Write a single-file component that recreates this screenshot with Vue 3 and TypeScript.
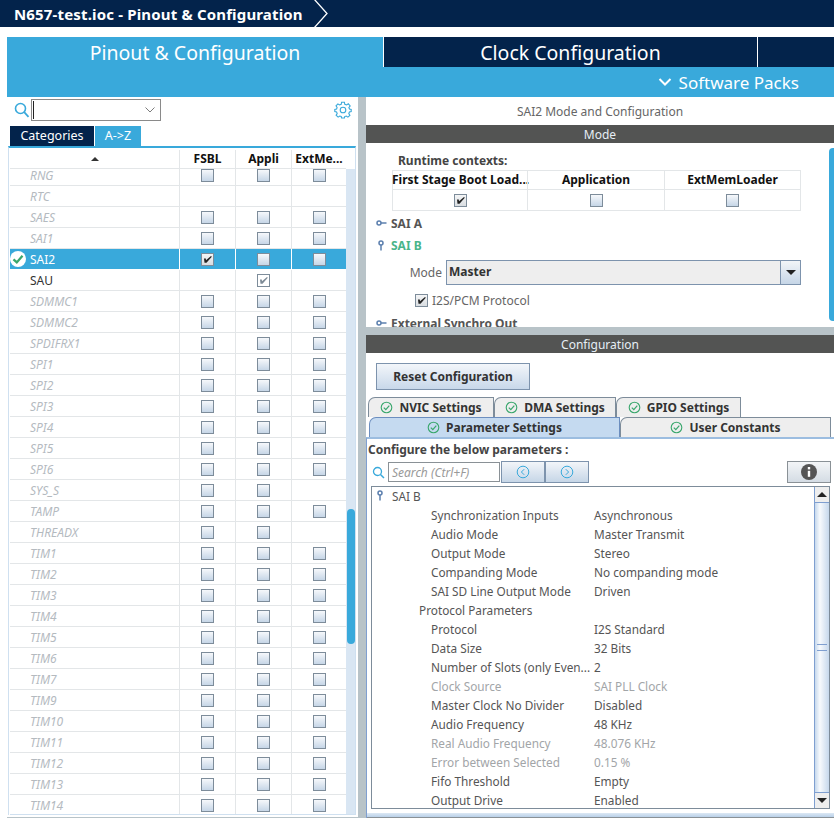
<script setup lang="ts">
interface Row { n: string; f: number; a: number; e: number; st?: string }
const mk = (n: string, f = 1, a = 1, e = 1, st = 'off'): Row => ({ n, f, a, e, st })
const rows: Row[] = [
  mk('RNG'), mk('RTC', 0, 0, 0), mk('SAES'), mk('SAI1'), mk('SAI2', 2, 1, 1, 'sel'), mk('SAU', 0, 3, 0, 'on'),
  mk('SDMMC1'), mk('SDMMC2'), mk('SPDIFRX1'), mk('SPI1'), mk('SPI2'), mk('SPI3'), mk('SPI4'), mk('SPI5'), mk('SPI6'),
  mk('SYS_S', 1, 1, 0), mk('TAMP'), mk('THREADX', 1, 1, 0), mk('TIM1'), mk('TIM2'), mk('TIM3'), mk('TIM4'), mk('TIM5'),
  mk('TIM6'), mk('TIM7'), mk('TIM9'), mk('TIM10'), mk('TIM11'), mk('TIM12'), mk('TIM13'), mk('TIM14'),
]
const params = [
  ['Synchronization Inputs', 'Asynchronous', ''], ['Audio Mode', 'Master Transmit', ''], ['Output Mode', 'Stereo', ''],
  ['Companding Mode', 'No companding mode', ''], ['SAI SD Line Output Mode', 'Driven', ''], ['Protocol Parameters', '', 'grp'],
  ['Protocol', 'I2S Standard', ''], ['Data Size', '32 Bits', ''], ['Number of Slots (only Even...', '2', ''],
  ['Clock Source', 'SAI PLL Clock', 'dis'], ['Master Clock No Divider', 'Disabled', ''], ['Audio Frequency', '48 KHz', ''],
  ['Real Audio Frequency', '48.076 KHz', 'dis'], ['Error between Selected', '0.15 %', 'dis'], ['Fifo Threshold', 'Empty', ''],
  ['Output Drive', 'Enabled', ''],
]
const topTabs = ['NVIC Settings', 'DMA Settings', 'GPIO Settings']
const ctxHeads = ['First Stage Boot Load...', 'Application', 'ExtMemLoader']
</script>

<template>
  <div class="root">
    <header class="title">
      <span class="title-text">N657-test.ioc - Pinout &amp; Configuration</span>
      <svg class="crumb" width="16" height="27" viewBox="0 0 16 27"><path d="M1 -1 L14 13.500 L1 28" fill="none" stroke="#fff" stroke-width="1.300" /></svg>
    </header>

    <div class="workspace">
      <nav class="tabs">
        <div class="tab tab-pinout">Pinout &amp; Configuration</div>
        <div class="tab tab-clock">Clock Configuration</div>
        <div class="tab tab-extra"></div>
      </nav>
      <div class="packs">
        <svg width="14" height="10" viewBox="0 0 14 10"><path d="M1.500 2 L7 7.500 L12.500 2" fill="none" stroke="#fff" stroke-width="2" /></svg>
        <span>Software Packs</span>
      </div>

      <div class="main">
        <aside class="left">
          <div class="searchrow">
            <svg class="mag" width="16" height="16" viewBox="0 0 16 16"><circle cx="6.500" cy="6.500" r="5" fill="none" stroke="#39a9db" stroke-width="1.600" /><path d="M10.200 10.200 L14.500 14.800" stroke="#39a9db" stroke-width="1.800" /></svg>
            <div class="combo">
              <span class="caret"></span>
              <svg width="10" height="6" viewBox="0 0 10 6"><path d="M0.500 0.500 L5 5 L9.500 0.500" fill="none" stroke="#7c7c7c" /></svg>
            </div>
            <svg class="gear" width="18" height="18" viewBox="0 0 18 18">
              <circle cx="9" cy="9" r="2.800" fill="none" stroke="#39a9db" stroke-width="1.100" />
              <path d="M7.600 1.200 H10.400 L10.800 3.300 L12.600 4 L14.300 2.800 L16.200 4.900 L14.900 6.500 L15.500 8 L17.200 8.400 V10.600 L15.400 11 L14.800 12.600 L15.900 14.300 L13.900 16.100 L12.300 15 L10.700 15.600 L10.400 17 H7.600 L7.200 15.500 L5.700 15 L4.100 16.100 L2.100 14.200 L3.200 12.600 L2.600 11 L0.800 10.600 V8.400 L2.600 8 L3.100 6.500 L2 4.900 L3.900 2.900 L5.500 4 L7.200 3.300 Z" fill="none" stroke="#39a9db" stroke-width="1.100" />
            </svg>
          </div>
          <div class="subtabs">
            <span class="sub sub-dark">Categories</span>
            <span class="sub sub-blue">A-&gt;Z</span>
          </div>
          <div class="tablewrap">
            <div class="thead">
              <div class="c0"><i class="sort"></i></div>
              <div class="c">FSBL</div>
              <div class="c">Appli</div>
              <div class="c">ExtMe...</div>
            </div>
            <div class="tbody">
              <div class="scroller">
                <div v-for="r in rows" :key="r.n" class="row" :class="r.st">
                  <div class="c0">
                    <svg v-if="r.st === 'sel'" class="okmark" width="16" height="16" viewBox="0 0 16 16"><circle cx="8" cy="8" r="8" fill="#fff" /><path d="M3.500 8.300 L6.800 11.400 L12.500 4.800" fill="none" stroke="#3aa76d" stroke-width="2.300" /></svg>
                    <span>{{ r.n }}</span>
                  </div>
                  <div v-for="(v, i) in [r.f, r.a, r.e]" :key="i" class="c">
                    <span v-if="v" class="box" :class="{ checked: v === 2, ghost: v === 3 }">
                      <svg v-if="v > 1" width="11" height="11" viewBox="0 0 11 11"><path d="M2 4.500 L2.500 8.800 L4.500 8.800 L9.800 2.800 L9 2 L4 6.200 L3.800 4.500 Z" :fill="v === 2 ? '#222' : '#7d8a96'" /></svg>
                    </span>
                  </div>
                </div>
              </div>
              <div class="vbar"><div class="vthumb"></div></div>
            </div>
          </div>
          <div class="leftfoot"></div>
        </aside>

        <section class="right">
          <div class="pane-title">SAI2 Mode and Configuration</div>
          <div class="bar">Mode</div>
          <div class="mode">
            <div class="mode-inner">
              <div class="rt-title">Runtime contexts:</div>
              <div class="ctx">
                <div v-for="h in ctxHeads" :key="h" class="ctx-h">{{ h }}</div>
                <div class="ctx-c"><span class="box checked"><svg width="11" height="11" viewBox="0 0 11 11"><path d="M2 4.500 L2.500 8.800 L4.500 8.800 L9.800 2.800 L9 2 L4 6.200 L3.800 4.500 Z" fill="#222" /></svg></span></div>
                <div class="ctx-c"><span class="box"></span></div>
                <div class="ctx-c"><span class="box"></span></div>
              </div>
              <div class="node node-a">
                <svg width="11" height="8" viewBox="0 0 11 8"><circle cx="3" cy="4" r="2" fill="none" stroke="#5b7fae" stroke-width="1.500" /><path d="M5 4 H10.500" stroke="#5b7fae" stroke-width="1.500" /></svg>
                <b>SAI A</b>
              </div>
              <div class="node node-b">
                <svg width="11" height="11" viewBox="0 0 11 11"><circle cx="5" cy="3" r="2" fill="none" stroke="#5b7fae" stroke-width="1.500" /><path d="M5 5 V10.500" stroke="#5b7fae" stroke-width="1.500" /></svg>
                <b>SAI B</b>
              </div>
              <div class="moderow">
                <label>Mode</label>
                <div class="select"><b>Master</b><span class="sel-btn"><i class="down"></i></span></div>
              </div>
              <div class="i2s">
                <span class="box checked"><svg width="11" height="11" viewBox="0 0 11 11"><path d="M2 4.500 L2.500 8.800 L4.500 8.800 L9.800 2.800 L9 2 L4 6.200 L3.800 4.500 Z" fill="#222" /></svg></span>
                <span>I2S/PCM Protocol</span>
              </div>
              <div class="node node-c">
                <svg width="11" height="8" viewBox="0 0 11 8"><circle cx="3" cy="4" r="2" fill="none" stroke="#5b7fae" stroke-width="1.500" /><path d="M5 4 H10.500" stroke="#5b7fae" stroke-width="1.500" /></svg>
                <b>External Synchro Out</b>
              </div>
            </div>
            <div class="mode-scroll"></div>
          </div>
          <div class="splitter"></div>
          <div class="bar">Configuration</div>
          <div class="config">
            <button class="reset">Reset Configuration</button>
            <div class="ctabs ctabs-1">
              <div v-for="t in topTabs" :key="t" class="ctab">
                <svg width="13" height="13" viewBox="0 0 13 13"><circle cx="6.500" cy="6.500" r="5.300" fill="none" stroke="#3aa76d" stroke-width="1.100" /><path d="M3.800 6.700 L5.800 8.700 L9.300 4.600" fill="none" stroke="#3aa76d" stroke-width="1.200" /></svg>
                {{ t }}
              </div>
            </div>
            <div class="ctabs ctabs-2">
              <div class="ctab ctab-param">
                <svg width="13" height="13" viewBox="0 0 13 13"><circle cx="6.500" cy="6.500" r="5.300" fill="none" stroke="#3aa76d" stroke-width="1.100" /><path d="M3.800 6.700 L5.800 8.700 L9.300 4.600" fill="none" stroke="#3aa76d" stroke-width="1.200" /></svg>
                Parameter Settings
              </div>
              <div class="ctab ctab-user">
                <svg width="13" height="13" viewBox="0 0 13 13"><circle cx="6.500" cy="6.500" r="5.300" fill="none" stroke="#3aa76d" stroke-width="1.100" /><path d="M3.800 6.700 L5.800 8.700 L9.300 4.600" fill="none" stroke="#3aa76d" stroke-width="1.200" /></svg>
                User Constants
              </div>
            </div>
            <div class="panel">
              <div class="configure">Configure the below parameters :</div>
              <div class="tools">
                <svg width="13" height="13" viewBox="0 0 13 13"><circle cx="5.500" cy="5.500" r="4" fill="none" stroke="#39a9db" stroke-width="1.300" /><path d="M8.500 8.500 L12 12" stroke="#39a9db" stroke-width="1.500" /></svg>
                <div class="finput">Search (Ctrl+F)</div>
                <div class="navs">
                  <button class="nav"><svg width="14" height="14" viewBox="0 0 14 14"><circle cx="7" cy="7" r="5.800" fill="none" stroke="#39a9db" /><path d="M8.200 4.200 L5.400 7 L8.200 9.800" fill="none" stroke="#39a9db" /></svg></button>
                  <button class="nav"><svg width="14" height="14" viewBox="0 0 14 14"><circle cx="7" cy="7" r="5.800" fill="none" stroke="#39a9db" /><path d="M5.800 4.200 L8.600 7 L5.800 9.800" fill="none" stroke="#39a9db" /></svg></button>
                </div>
                <button class="info"><svg width="16" height="16" viewBox="0 0 16 16"><circle cx="8" cy="8" r="8" fill="#555" /><rect x="6.800" y="6.800" width="2.400" height="6" fill="#fff" /><rect x="6.800" y="3" width="2.400" height="2.400" fill="#fff" /></svg></button>
              </div>
              <div class="tree">
                <div class="tree-body">
                  <div class="tree-root">
                    <svg width="9" height="11" viewBox="0 0 9 11"><circle cx="4" cy="3" r="2" fill="none" stroke="#5b7fae" stroke-width="1.500" /><path d="M4 5 V10.500" stroke="#5b7fae" stroke-width="1.500" /></svg>
                    <span>SAI B</span>
                  </div>
                  <div v-for="p in params" :key="p[0]" class="param" :class="p[2]">
                    <span class="pk">{{ p[0] }}</span>
                    <span class="pv">{{ p[1] }}</span>
                  </div>
                </div>
                <div class="tscroll">
                  <div class="arrow"><i class="up"></i></div>
                  <div class="tthumb">
                    <span class="grip"></span>
                  </div>
                  <div class="arrow"><i class="down"></i></div>
                </div>
              </div>
              <div class="panel-foot"></div>
            </div>
          </div>
        </section>
      </div>
    </div>
  </div>
</template>

<style scoped>
.root {
  width: 834px;
  height: 818px;
  overflow: hidden;
  background: #fff;
  font-family: "Noto Sans", sans-serif;
  font-size: 12px;
  color: #555;
  display: flex;
  flex-direction: column;
}
.title {
  height: 27px;
  flex: none;
  background: #03234b;
  display: flex;
  align-items: center;
  overflow: hidden;
  color: #fff;
}
.title-text {
  margin-left: 14px;
  font-weight: 700;
  font-size: 15px;
  letter-spacing: 0.16px;
  white-space: nowrap;
}
.crumb { margin-left: 10px; }
.workspace {
  flex: 1;
  min-height: 0;
  padding: 10px 0 0 7px;
  display: flex;
  flex-direction: column;
}
.tabs {
  height: 30px;
  flex: none;
  display: flex;
}
.tab {
  font-size: 19.5px;
  line-height: 32px;
  text-align: center;
  color: #fff;
}
.tab-pinout { width: 376px; background: #39a9db; }
.tab-clock { width: 373px; margin-left: 1px; background: #03234b; }
.tab-extra { flex: 1; margin-left: 1px; background: #03234b; }
.packs {
  height: 30px;
  flex: none;
  background: #39a9db;
  color: #fff;
  display: flex;
  align-items: center;
  justify-content: flex-end;
  gap: 7px;
  padding-right: 35px;
  font-size: 17px;
}
.main {
  flex: 1;
  min-height: 0;
  display: flex;
}
.left {
  width: 351px;
  flex: none;
  display: flex;
  flex-direction: column;
}
.searchrow {
  height: 29px;
  flex: none;
  box-sizing: border-box;
  display: flex;
  align-items: center;
  padding: 0 6px 3px 7px;
}
.mag { margin-right: 1px; }
.combo {
  width: 130px;
  height: 22px;
  box-sizing: border-box;
  border: 1px solid #8a8a8a;
  display: flex;
  align-items: center;
  justify-content: space-between;
  padding-right: 5px;
}
.caret { width: 1px; height: 18px; background: #222; margin-left: 1px; }
.gear { margin-left: auto; }
.subtabs {
  height: 20px;
  flex: none;
  display: flex;
  gap: 1px;
  padding-left: 3px;
}
.sub {
  color: #fff;
  font-size: 12.5px;
  line-height: 19px;
  text-align: center;
}
.sub-dark { width: 84px; background: #03234b; }
.sub-blue { width: 46px; background: #39a9db; }
.tablewrap {
  margin-left: 1px;
  width: 348px;
  box-sizing: border-box;
  border-top: 2px solid #39a9db;
  border-right: 1px solid #cfe0f0;
  border-left: 1px solid #cfe0f0;
  padding: 2px 0 0 1px;
  height: 669px;
  flex: none;
  display: flex;
  flex-direction: column;
}
.leftfoot {
  margin-top: auto;
  height: 1px;
  flex: none;
  background: #b8c3c8;
}
.thead {
  height: 19px;
  flex: none;
  display: flex;
  border-bottom: 1px solid #e3e6e8;
  box-sizing: border-box;
  margin-right: 9px;
  font-weight: 700;
  color: #111;
}
.thead .c { line-height: 20px; }
.c0 {
  width: 170px;
  flex: none;
  box-sizing: border-box;
  border-right: 1px solid #e3e6e8;
  padding-left: 20px;
  position: relative;
  display: flex;
  align-items: center;
}
.thead .c0 { justify-content: center; padding-left: 0; }
.sort {
  width: 0;
  height: 0;
  border: 4px solid transparent;
  border-top: 0;
  border-bottom: 4px solid #333;
}
.c {
  width: 56px;
  flex: none;
  box-sizing: border-box;
  border-right: 1px solid #e3e6e8;
  display: flex;
  align-items: center;
  justify-content: center;
  white-space: nowrap;
}
.c:last-child { width: 54px; border-right: 0; }
.tbody {
  flex: 1;
  min-height: 0;
  display: flex;
  overflow: hidden;
  border-bottom: 1px solid #cfe0f0;
}
.scroller {
  flex: 1;
  margin-top: -4px;
}
.row {
  height: 21px;
  box-sizing: border-box;
  display: flex;
  border-bottom: 1px solid #e3e6e8;
}
.row .c0 { font-style: italic; color: #b4babf; }
.row.on .c0 { font-style: normal; color: #333; }
.row.sel { background: #39a9db; border-bottom-color: #fff; }
.row.sel .c0 { font-style: normal; color: #fff; border-right-color: #fff; }
.row.sel .c { border-right-color: #fff; }
.okmark { position: absolute; left: 0; top: 2px; }
.box {
  width: 13px;
  height: 13px;
  box-sizing: border-box;
  border: 1px solid #7d8c9a;
  background: linear-gradient(#f6f8fb, #c6d6e7);
  display: inline-flex;
  align-items: center;
  justify-content: center;
}
.box.checked { background: linear-gradient(#f4f5f6, #d9dde1); }
.box.ghost { background: #fff; }
.vbar {
  width: 9px;
  flex: none;
  background: #d9e6f3;
  position: relative;
}
.vthumb {
  position: absolute;
  left: 1px;
  top: 340px;
  width: 8px;
  height: 135px;
  background: #39a9db;
  border-radius: 4px;
}
.right {
  margin-left: 8px;
  flex: 1;
  min-width: 0;
  display: flex;
  flex-direction: column;
  box-shadow: -8px 0 0 #b8c3c8;
}
.pane-title {
  height: 28px;
  flex: none;
  line-height: 29px;
  text-align: center;
  color: #666;
}
.bar {
  height: 18px;
  flex: none;
  background: #535453;
  color: #e6eef5;
  line-height: 20px;
  text-align: center;
  overflow: hidden;
}
.mode {
  height: 184px;
  flex: none;
  overflow: hidden;
  display: flex;
}
.mode-inner {
  flex: 1;
  min-width: 0;
  padding: 10px 0 0 10px;
}
.rt-title {
  margin-left: 22px;
  height: 17px;
  line-height: 16px;
  font-weight: 700;
  color: #444;
}
.ctx {
  margin-left: 16px;
  width: 408px;
  display: grid;
  grid-template-columns: 135px 137px 136px;
  grid-template-rows: 19px 20px;
  border: 1px solid #e3e6e8;
  border-width: 1px 1px 1px 0;
  box-sizing: content-box;
}
.ctx-h {
  font-weight: 700;
  color: #111;
  line-height: 18px;
  text-align: center;
  border-left: 1px solid #e3e6e8;
  border-bottom: 1px solid #e3e6e8;
  white-space: nowrap;
}
.ctx-h:first-child { text-align: left; text-indent: -1px; }
.ctx-c {
  border-left: 1px solid #e3e6e8;
  display: flex;
  align-items: center;
  justify-content: center;
}
.node {
  display: flex;
  align-items: center;
  gap: 4px;
  white-space: nowrap;
  height: 18px;
}
.node b { color: #555; }
.node-a { margin-top: 3px; }
.node-b { margin-top: 4px; }
.node-b b { color: #4ab58a; }
.moderow {
  display: flex;
  align-items: center;
  margin-top: 6px;
  height: 24px;
}
.moderow label {
  width: 66px;
  text-align: right;
  color: #666;
  margin-right: 4px;
}
.select {
  width: 355px;
  height: 25px;
  box-sizing: border-box;
  border: 1px solid #7d93ad;
  background: #eee;
  display: flex;
  align-items: center;
  justify-content: space-between;
  padding-left: 2px;
  color: #333;
  line-height: 20px;
}
.select b { margin-top: -1px; }
.sel-btn {
  width: 20px;
  height: 23px;
  box-sizing: border-box;
  border-left: 1px solid #7d93ad;
  background: linear-gradient(#f2f5f8, #c6d6e7);
  display: flex;
  align-items: center;
  justify-content: center;
}
.down {
  width: 0;
  height: 0;
  border: 5px solid transparent;
  border-bottom: 0;
  border-top: 5px solid #222;
}
.up {
  width: 0;
  height: 0;
  border: 5px solid transparent;
  border-top: 0;
  border-bottom: 5px solid #222;
}
.i2s {
  margin: 8px 0 0 39px;
  display: flex;
  align-items: center;
  gap: 4px;
  color: #666;
  height: 17px;
}
.node-c { margin-top: 5px; }
.mode-scroll {
  width: 5px;
  flex: none;
  margin: 5px 0 6px;
  background: #39a9db;
  border-radius: 4px 0 0 4px;
}
.splitter {
  height: 8px;
  flex: none;
  background: #b8c3c8;
}
.config {
  flex: 1;
  min-height: 0;
  display: flex;
  flex-direction: column;
  padding-top: 10px;
}
.reset {
  margin-left: 10px;
  width: 154px;
  height: 27px;
  flex: none;
  box-sizing: border-box;
  border: 1px solid #7d93ad;
  background: linear-gradient(#f3f6fa, #c8d8ea);
  font: 700 12px "Noto Sans", sans-serif;
  color: #333;
}
.ctabs {
  display: flex;
  height: 20px;
  flex: none;
  padding-left: 2px;
}
.ctabs-1 { margin-top: 7px; }
.ctab {
  box-sizing: border-box;
  border: 1px solid #7d8c9a;
  border-bottom: 0;
  border-right-width: 1px;
  border-top-left-radius: 7px;
  background: #eee;
  font-weight: 700;
  color: #333;
  display: flex;
  align-items: center;
  justify-content: center;
  gap: 6px;
  white-space: nowrap;
}
.ctab:nth-child(1) { width: 126px; }
.ctab:nth-child(2) { width: 122px; }
.ctab:nth-child(3) { width: 125px; }
.ctabs-2 { padding-left: 3px; }
.ctabs-2 .ctab-param { width: 251px; background: #c5daf0; border-color: #6c8ebf; }
.ctabs-2 .ctab-user { width: 211px; border-color: #7d8c9a; }
.panel {
  flex: 1;
  min-height: 0;
  border-top: 2px solid #9cbde0;
  border-left: 1px solid #7f9fd0;
  padding: 2px 0 0 1px;
  display: flex;
  flex-direction: column;
}
.configure {
  font-weight: 700;
  color: #444;
  height: 19px;
  line-height: 17px;
  flex: none;
}
.tools {
  height: 24px;
  flex: none;
  display: flex;
  align-items: center;
  padding-left: 4px;
  padding-right: 3px;
  margin-bottom: 2px;
}
.finput {
  margin-left: 3px;
  width: 112px;
  height: 20px;
  box-sizing: border-box;
  border: 1px solid #8a9196;
  padding-left: 3px;
  line-height: 20px;
  font-style: italic;
  color: #999;
}
.navs { display: flex; margin-left: 1px; }
.nav, .info {
  width: 44px;
  height: 22px;
  box-sizing: border-box;
  border: 1px solid #7d93ad;
  background: linear-gradient(#f2f5f9, #c6d6e7);
  display: flex;
  align-items: center;
  justify-content: center;
  padding: 0;
}
.info { margin-left: auto; border-color: #8a9196; background: linear-gradient(#f3f5f7, #d4dce4); }
.tree {
  margin: 0 4px 0 3px;
  height: 323px;
  flex: none;
  box-sizing: border-box;
  border: 1px solid #7d8c9a;
  display: flex;
}
.tree-body {
  flex: 1;
  min-width: 0;
  font-size: 11.8px;
  margin-top: -1px;
}
.tree-root {
  height: 19px;
  display: flex;
  align-items: center;
  gap: 7px;
  padding-left: 4px;
  color: #555;
}
.param {
  height: 19px;
  display: flex;
  align-items: center;
  white-space: nowrap;
  padding-left: 59px;
  color: #555;
}
.pk { width: 163px; flex: none; }
.param.grp .pk { margin-left: -12px; }
.param.dis { color: #a2a5a8; }
.tscroll {
  width: 15px;
  flex: none;
  display: flex;
  flex-direction: column;
}
.arrow {
  height: 15px;
  flex: none;
  background: #eee;
  border-left: 1px solid #7f9fd0;
  display: flex;
  align-items: center;
  justify-content: center;
}
.tthumb {
  flex: 1;
  border: 1px solid #7f9fd0;
  border-right: 0;
  background: linear-gradient(90deg, #c6d8ec, #f7fafd 35%, #c6d8ec);
  display: flex;
  align-items: center;
  justify-content: center;
}
.grip {
  width: 10px;
  height: 5px;
  border-top: 1px solid #7f9fd0;
  border-bottom: 1px solid #7f9fd0;
}
.panel-foot {
  margin: 4px 0 0 -1px;
  height: 5px;
  flex: none;
  box-sizing: border-box;
  background: linear-gradient(#dce8f4, #b9d0e8);
  border-bottom: 1px solid #8a9196;
}
</style>

<style>
html, body { margin: 0; background: #fff; }
</style>
